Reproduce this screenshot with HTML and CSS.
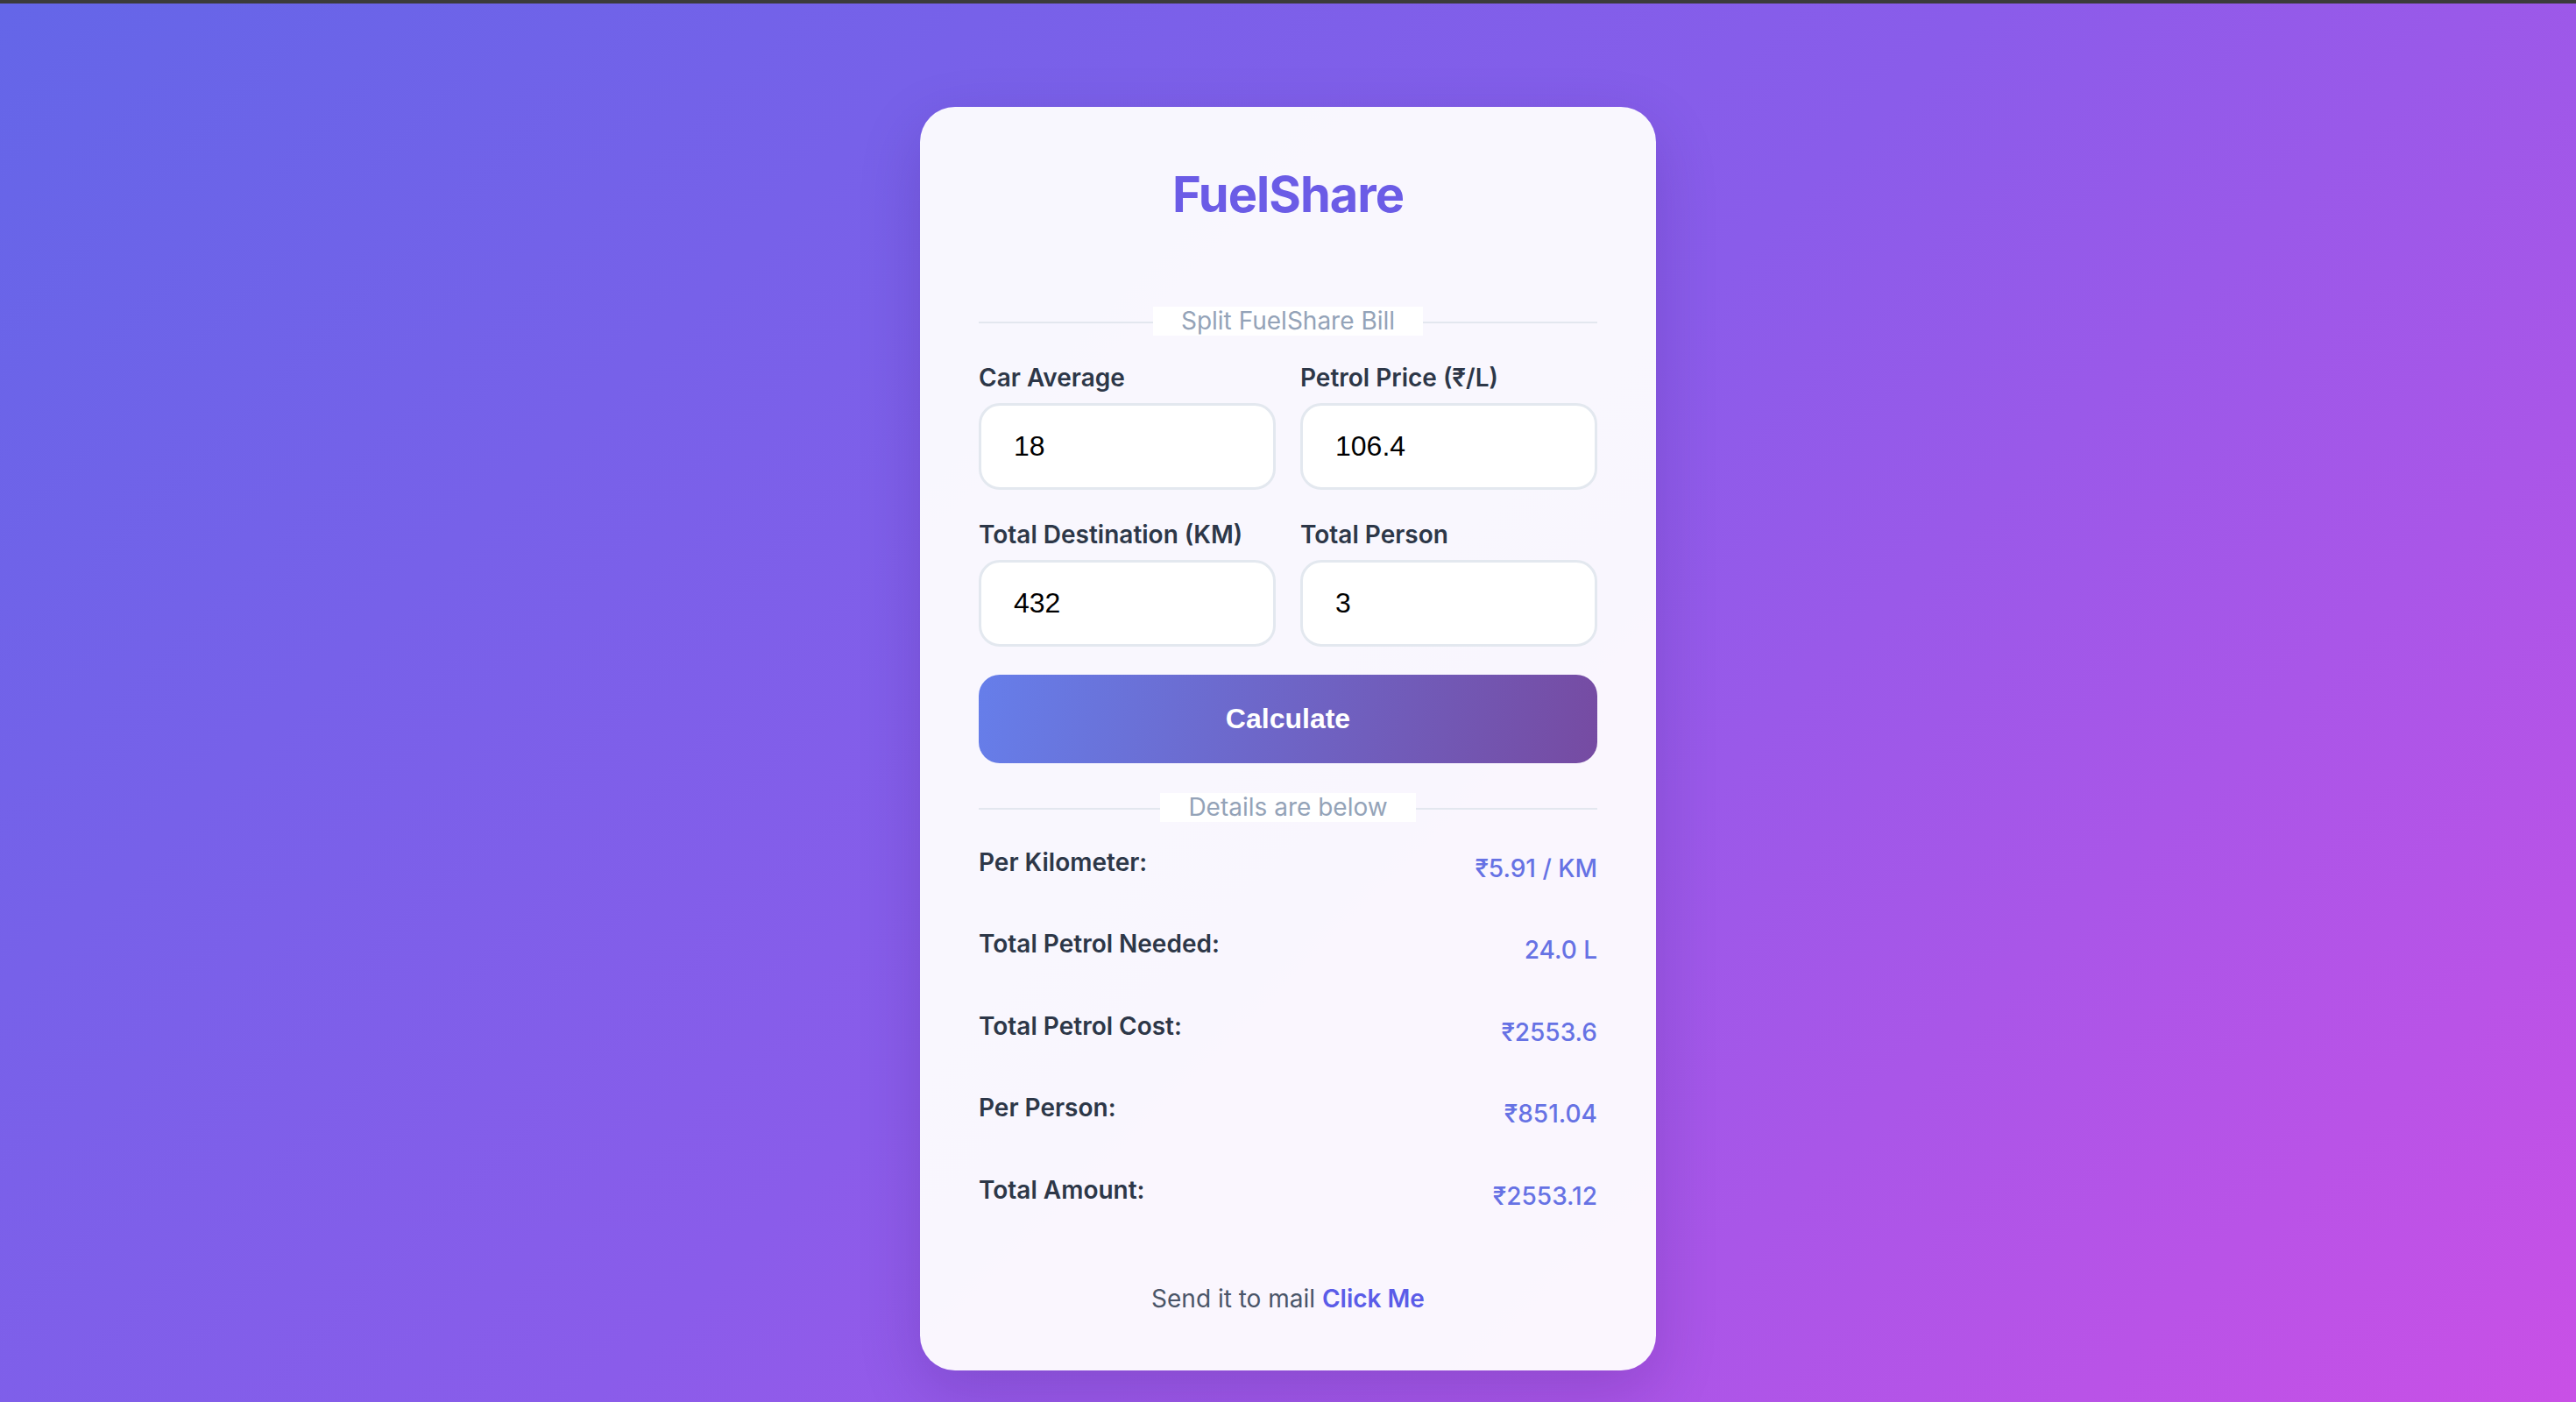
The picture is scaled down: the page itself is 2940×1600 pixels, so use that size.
FILE: index.html
```html
<!DOCTYPE html>
<html lang="en">
<head>
<meta charset="utf-8">
<title>FuelShare</title>
<link rel="stylesheet" href="styles.css">
</head>
<body>
<main class="page">
  <section class="card">
    <h1 class="title">FuelShare</h1>
    <div class="divider"><span class="divider-label">Split FuelShare Bill</span></div>
    <div class="form-grid">
      <div class="field">
        <label class="field-label">Car Average</label>
        <input class="field-input" type="text" value="18">
      </div>
      <div class="field">
        <label class="field-label">Petrol Price (₹/L)</label>
        <input class="field-input" type="text" value="106.4">
      </div>
      <div class="field">
        <label class="field-label">Total Destination (KM)</label>
        <input class="field-input" type="text" value="432">
      </div>
      <div class="field">
        <label class="field-label">Total Person</label>
        <input class="field-input" type="text" value="3">
      </div>
    </div>
    <button class="calc-btn" type="button">Calculate</button>
    <div class="divider divider-results"><span class="divider-label">Details are below</span></div>
    <div class="results">
      <div class="result-row"><span class="result-label">Per Kilometer:</span><span class="result-value">₹5.91 / KM</span></div>
      <div class="result-row"><span class="result-label">Total Petrol Needed:</span><span class="result-value">24.0 L</span></div>
      <div class="result-row"><span class="result-label">Total Petrol Cost:</span><span class="result-value">₹2553.6</span></div>
      <div class="result-row"><span class="result-label">Per Person:</span><span class="result-value">₹851.04</span></div>
      <div class="result-row"><span class="result-label">Total Amount:</span><span class="result-value">₹2553.12</span></div>
    </div>
    <p class="footer">Send it to mail <a class="footer-link" href="#">Click Me</a></p>
  </section>
</main>
</body>
</html>
```
FILE: styles.css
```css
* { box-sizing: border-box; }

html, body {
  margin: 0;
  padding: 0;
}

body {
  min-height: 100vh;
  border-top: 4px solid #3b3b3b;
  background: linear-gradient(135deg, #6466e8 0%, #8a5cea 50%, #c950e6 100%);
  font-family: Inter, "Noto Sans", sans-serif;
  color: #2d3748;
}

.page {
  display: flex;
  justify-content: center;
  padding-top: 118px;
  min-height: calc(100vh - 4px);
}

.card {
  width: 840px;
  height: 1442px;
  padding: 66px 67px 61px;
  background: rgba(255, 255, 255, 0.95);
  border-radius: 40px;
  box-shadow: 0 24px 70px rgba(40, 10, 90, 0.18);
  display: flex;
  flex-direction: column;
}

.title {
  margin: 0 0 94px;
  font-size: 56px;
  font-weight: 700;
  line-height: 68px;
  letter-spacing: -1px;
  text-align: center;
  color: #6b5ce6;
}

.divider {
  position: relative;
  height: 33px;
  display: flex;
  justify-content: center;
  align-items: center;
}

.divider::before {
  content: "";
  position: absolute;
  left: 0;
  right: 0;
  top: 17px;
  height: 2px;
  background: #e3e7ef;
}

.divider-label {
  position: relative;
  background: #ffffff;
  padding: 0 32px;
  height: 33px;
  line-height: 33px;
  font-size: 28px;
  color: #94a3b8;
}

.form-grid {
  margin-top: 27px;
  display: grid;
  grid-template-columns: 1fr 1fr;
  column-gap: 28px;
  row-gap: 30px;
}

.field {
  display: flex;
  flex-direction: column;
}

.field-label {
  font-size: 28px;
  line-height: 42px;
  font-weight: 600;
  color: #2d3748;
  margin-bottom: 8px;
}

.field-input {
  height: 99px;
  width: 100%;
  border: 3px solid #e3e8ef;
  border-radius: 24px;
  background: #ffffff;
  padding: 0 37px;
  font-family: "Liberation Sans", Arial, sans-serif;
  font-size: 32px;
  color: #000000;
  outline: none;
}

.calc-btn {
  margin-top: 32px;
  height: 101px;
  width: 100%;
  border: none;
  border-radius: 24px;
  background: linear-gradient(100deg, #667eea 0%, #764ba2 100%);
  color: #ffffff;
  font-family: "Liberation Sans", Arial, sans-serif;
  font-size: 32px;
  font-weight: 700;
  cursor: pointer;
}

.divider-results {
  margin-top: 34px;
}

.results {
  margin-top: 0;
  display: flex;
  flex-direction: column;
}

.result-row {
  display: flex;
  justify-content: space-between;
  align-items: flex-start;
  height: 93.5px;
  padding-top: 25px;
}

.result-label {
  font-size: 28px;
  line-height: 42px;
  font-weight: 600;
  color: #2d3748;
}

.result-value {
  margin-top: 7px;
  font-size: 28px;
  line-height: 42px;
  font-weight: 500;
  color: #6672e4;
}

.footer {
  margin: 56px 0 0;
  font-size: 28px;
  line-height: 42px;
  text-align: center;
  color: #4a5568;
}

.footer-link {
  color: #5b5ce8;
  font-weight: 600;
  text-decoration: none;
}
```
